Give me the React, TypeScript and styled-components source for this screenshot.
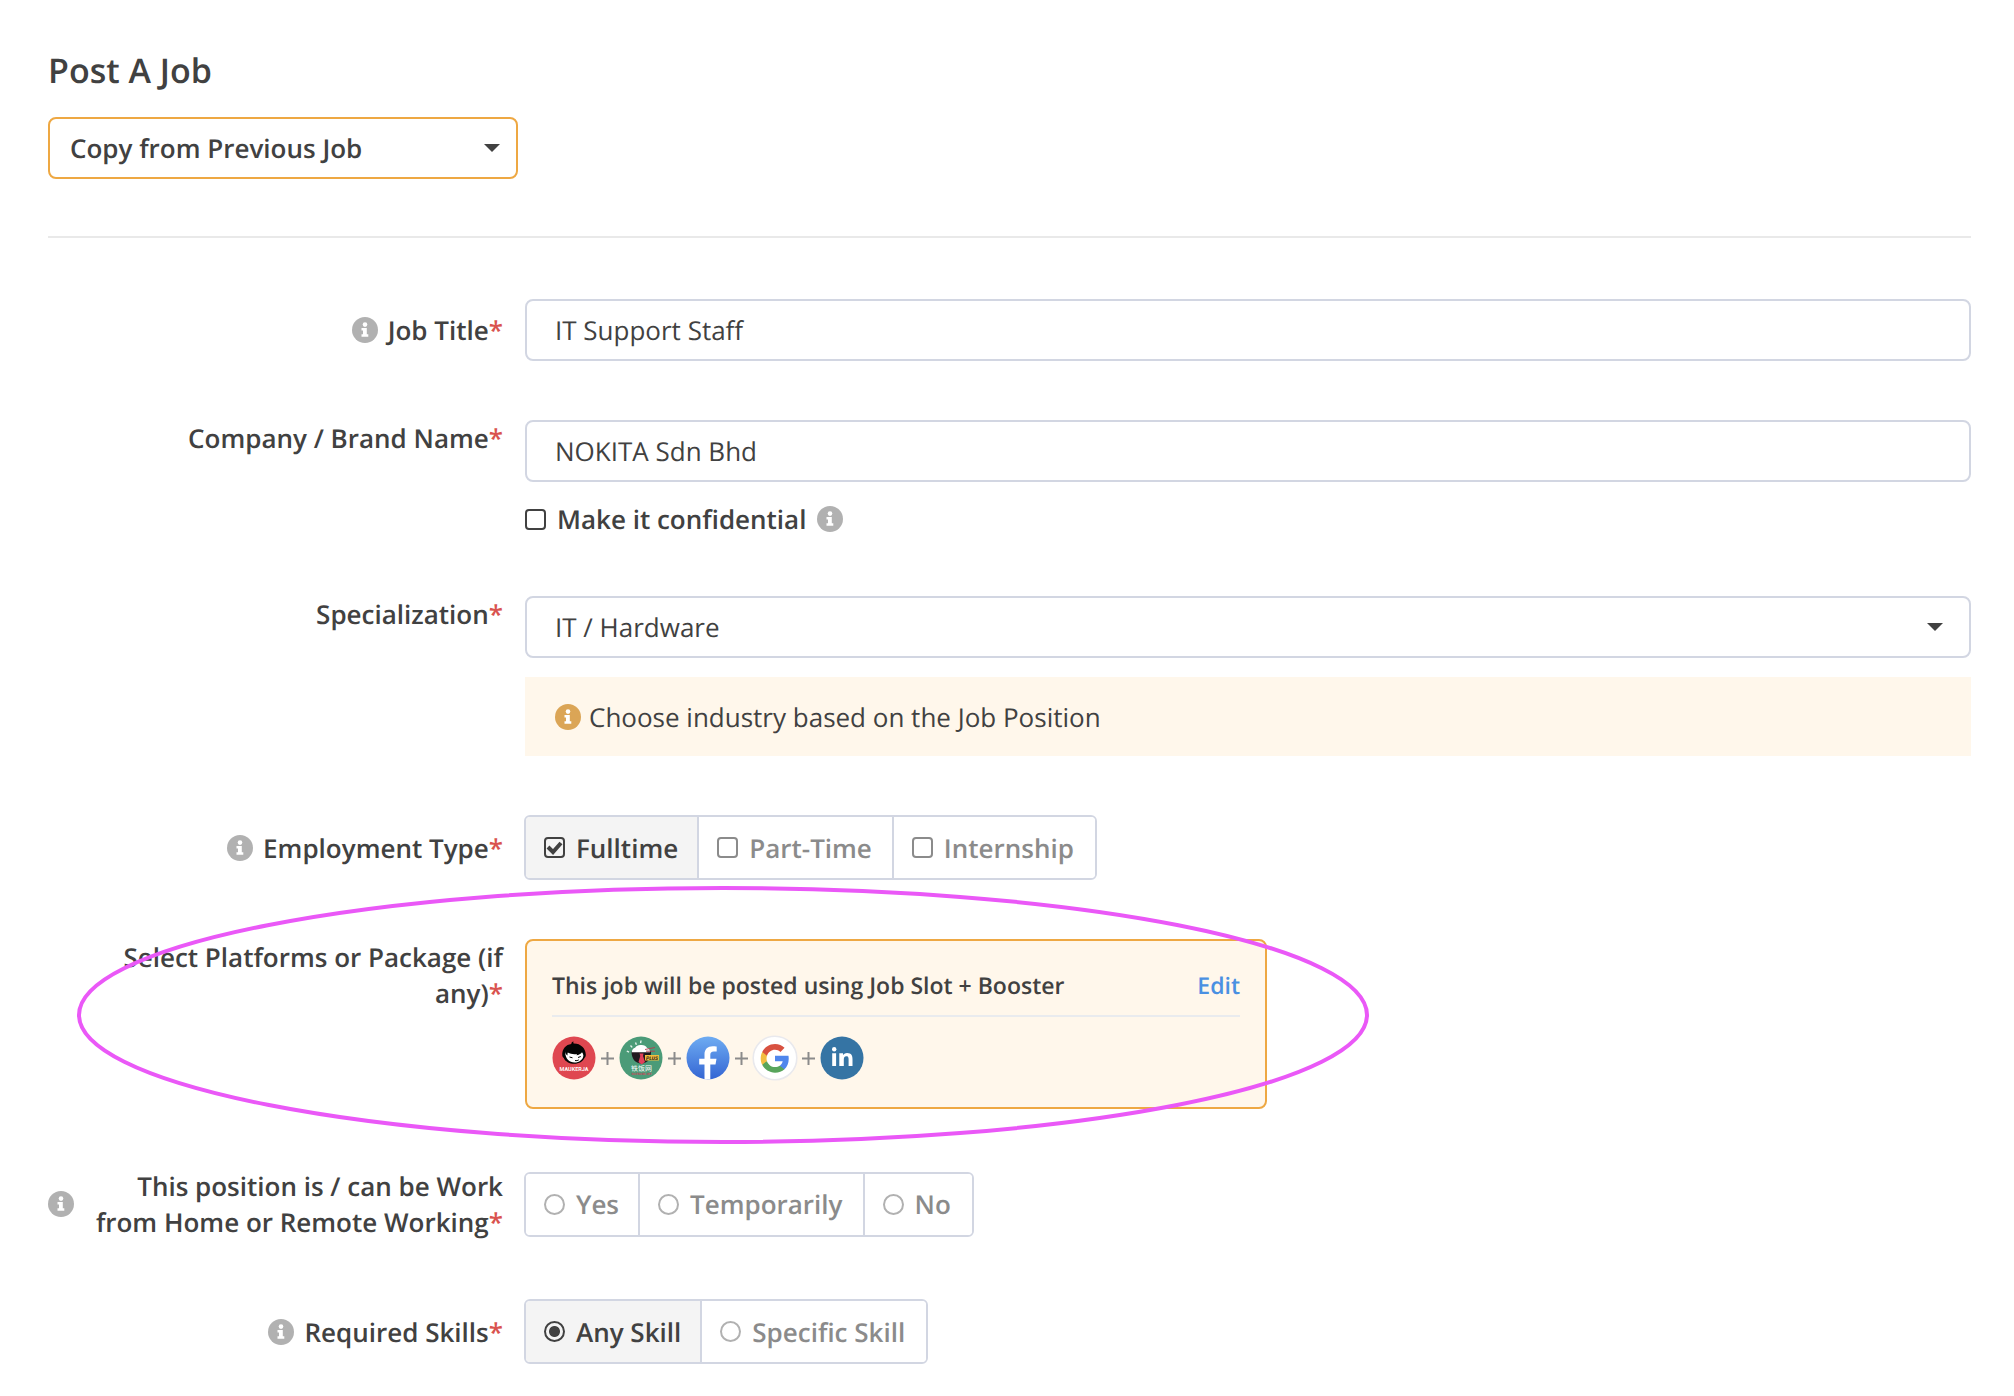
import React, { useState } from 'react';
import styled, { createGlobalStyle } from 'styled-components';

const GlobalStyle = createGlobalStyle`
  *, *::before, *::after { box-sizing: border-box; }
  body {
    margin: 0;
    background: #fff;
    color: #414141;
    font-family: 'Open Sans', 'Noto Sans', 'Noto Sans CJK SC', sans-serif;
    font-size: 26px;
    line-height: 36px;
    text-rendering: geometricPrecision;
  }
`;

const Page = styled.main`
  padding: 46px 43px 32px 48px;
`;

const Title = styled.h1`
  margin: 0 0 23px;
  font-size: 34px;
  line-height: 48px;
  font-weight: 600;
`;

const SelectBox = styled.div<{ $compact?: boolean }>`
  display: grid;
  align-items: center;
  max-width: ${(p) => (p.$compact ? '470px' : 'none')};
`;

const Select = styled.select<{ $accent?: boolean }>`
  grid-area: 1 / 1;
  appearance: none;
  width: 100%;
  height: 62px;
  padding: 0 ${(p) => (p.$accent ? '20px' : '28px')};
  border: 2px solid ${(p) => (p.$accent ? '#eea843' : '#d2d6e2')};
  border-radius: 8px;
  background: #fff;
  color: inherit;
  font: inherit;
  font-weight: ${(p) => (p.$accent ? 600 : 400)};
  text-rendering: inherit;
`;

const Caret = styled.svg<{ $inset: number }>`
  grid-area: 1 / 1;
  justify-self: end;
  width: 16px;
  height: 8px;
  margin-right: ${(p) => p.$inset}px;
  pointer-events: none;
`;

const Divider = styled.hr`
  height: 2px;
  margin: 57px 0 61px;
  border: 0;
  background: #e9e9e9;
`;

const Form = styled.form`
  display: grid;
  gap: 59px;
`;

const Row = styled.div<{ $top?: boolean }>`
  position: relative;
  display: grid;
  grid-template-columns: 455px minmax(0, 1fr);
  column-gap: 22px;
  align-items: ${(p) => (p.$top ? 'start' : 'center')};
`;

const LabelCell = styled.div`
  display: flex;
  justify-content: flex-end;
  align-items: center;
  gap: 10px;
  font-weight: 600;
  text-align: right;
`;

const LabelText = styled.label`
  max-width: 419px;
`;

const Star = styled.span`
  color: #d9534f;
`;

const Info = styled.svg<{ $warm?: boolean }>`
  flex: none;
  width: 26px;
  height: 26px;
  fill: ${(p) => (p.$warm ? '#dba556' : '#b1b1b1')};
`;

const Controls = styled.div`
  display: grid;
  gap: 19px;
`;

const TextInput = styled.input`
  width: 100%;
  height: 62px;
  padding: 0 28px;
  border: 2px solid #d2d6e2;
  border-radius: 8px;
  background: #fff;
  color: inherit;
  font: inherit;
  text-rendering: inherit;
`;

const Confidential = styled.div`
  display: flex;
  align-items: center;
  gap: 11px;
  font-weight: 600;
`;

const TickLabel = styled.label`
  display: flex;
  align-items: center;
  gap: 11px;
`;

const Mark = styled.input`
  appearance: none;
  flex: none;
  width: 21px;
  height: 21px;
  margin: 0;
  border: 2px solid currentColor;
  border-radius: 4px;
  background: center / 17px 17px no-repeat;
  color: inherit;

  &[type='radio'] {
    border-radius: 50%;
    border-color: #b1b1b1;
  }
  &[type='checkbox']:checked {
    background-image: url("data:image/svg+xml,%3Csvg xmlns='http://www.w3.org/2000/svg' viewBox='0 0 17 17'%3E%3Cpath d='M2 8 7 13 15 4' fill='none' stroke='%23414141' stroke-width='4'/%3E%3C/svg%3E");
  }
  &[type='radio']:checked {
    border-color: #414141;
    background-image: radial-gradient(circle, #414141 5px, transparent 6px);
  }
`;

const Notice = styled.p`
  display: flex;
  align-items: center;
  gap: 8px;
  height: 79px;
  margin: 0;
  padding: 0 30px;
  background: #fff7eb;
`;

const Segments = styled.div`
  display: flex;
  justify-self: start;
  width: max-content;
  height: 65px;
  margin-left: -1px;
  border: 2px solid #d2d6e2;
  border-radius: 6px;
  overflow: hidden;
`;

const Segment = styled.label<{ $on: boolean }>`
  display: flex;
  align-items: center;
  gap: 11px;
  padding: 0 19px 0 18px;
  background: ${(p) => (p.$on ? '#f4f4f4' : '#fff')};
  color: ${(p) => (p.$on ? '#414141' : '#8b8b8b')};
  font-weight: 600;

  & + & {
    padding-right: 20px;
    border-left: 2px solid #d2d6e2;
  }
  &:last-child {
    padding-right: 21px;
  }
`;

const Card = styled.section`
  width: 100%;
  max-width: 742px;
  height: 170px;
  padding: 26px 25px;
  border: 2px solid #eea843;
  border-radius: 8px;
  background: #fff7eb;
`;

const CardHead = styled.div`
  display: flex;
  justify-content: space-between;
  padding-bottom: 12px;
  border-bottom: 2px solid #e9ebee;
  font-size: 23px;
  font-weight: 600;
`;

const EditLink = styled.a`
  color: #4a90e2;
  text-decoration: none;
`;

const Platforms = styled.div`
  display: flex;
  align-items: center;
  gap: 5px;
  padding-top: 18px;
`;

const Logo = styled.svg`
  width: 46px;
  height: 46px;
  margin: 0 -1px;
`;

const Plus = styled.svg`
  width: 13px;
  height: 13px;
`;

const Highlight = styled.svg`
  position: absolute;
  top: -54px;
  left: 27px;
  width: 1296px;
  height: 260px;
  pointer-events: none;
`;

function InfoIcon({ warm }: { warm?: boolean }) {
  return (
    <Info $warm={warm} viewBox="0 0 26 26" role="img" aria-label="More information">
      <circle cx="13" cy="13" r="13" />
      <circle cx="13" cy="7.600" r="2.300" fill="#fff" />
      <path d="M9.500 11h5.300v6.300h1.500v2.500H9.500v-2.500H11v-3.800H9.500z" fill="#fff" />
    </Info>
  );
}

function CaretIcon({ inset }: { inset: number }) {
  return (
    <Caret $inset={inset} viewBox="0 0 16 8" aria-hidden="true">
      <path d="M0 0h16L8 8z" fill="#414141" />
    </Caret>
  );
}

function Label({ htmlFor, id, info, children }: {
  htmlFor?: string; id?: string; info?: boolean; children: React.ReactNode;
}) {
  return (
    <LabelCell>
      {info && <InfoIcon />}
      <LabelText as={htmlFor ? 'label' : 'span'} htmlFor={htmlFor} id={id}>
        {children}<Star>*</Star>
      </LabelText>
    </LabelCell>
  );
}

function ChoiceGroup({ name, labelledBy, options, initial, multiple }: {
  name: string; labelledBy: string; options: string[]; initial: string[]; multiple?: boolean;
}) {
  const [picked, setPicked] = useState<string[]>(initial);
  const toggle = (option: string) => {
    if (!multiple) setPicked([option]);
    else setPicked((p) => (p.includes(option) ? p.filter((o) => o !== option) : [...p, option]));
  };
  return (
    <Segments role={multiple ? 'group' : 'radiogroup'} aria-labelledby={labelledBy}>
      {options.map((option) => (
        <Segment key={option} $on={picked.includes(option)}>
          <Mark
            type={multiple ? 'checkbox' : 'radio'}
            name={name}
            checked={picked.includes(option)}
            onChange={() => toggle(option)}
          />
          {option}
        </Segment>
      ))}
    </Segments>
  );
}

function MaukerjaLogo() {
  return (
    <Logo viewBox="0 0 46 46" role="img" aria-label="Maukerja">
      <circle cx="23" cy="23" r="21.500" fill="#df4750" />
      <path d="M11.300 20.500C10.800 14 15 9.400 20.300 8.900c0-1.300 1-2.200 2.300-2.300-.4.700-.4 1.300 0 1.900 7-.2 12 4.800 12.200 11 .1 1.600-.4 2.700-1.200 3.300C32 26.600 28 28.800 23.300 28.800S14 26.500 12.800 23c-.8-.5-1.400-1.300-1.500-2.500z" fill="#050505" />
      <path d="M14 16.500c.3 2 1.100 3.200 2.600 4-.3-1.200-.2-2.100.2-3 2.800 1.500 6 2 9.300 1.400l-.7 1.400c2.400-.3 4.300-1.300 5.600-3 .8 1 1.300 2 1.400 3.200-.3 4.300-4.300 7-8.800 7-5.300 0-9.300-3.600-9.600-11z" fill="#fff" />
      <path d="m18.500 22 3 .8M27 22.500l2.800-1M24 25.500c1.500.3 2.800.1 3.800-.7" stroke="#050505" strokeWidth="1" fill="none" />
      <text x="23" y="36" textAnchor="middle" fontSize="5.500" fontWeight="600" fontFamily="Roboto, sans-serif" fill="#fff">MAUKERJA</text>
    </Logo>
  );
}

function RicebowlLogo() {
  return (
    <Logo viewBox="0 0 46 46" role="img" aria-label="Ricebowl">
      <circle cx="23" cy="23" r="21.500" fill="#4b9b78" />
      <path d="m8.800 16 2.200 1.200M12.500 10.500l1.700 1.900M17.500 7.500l.9 2.200M23 5.500l-.4 2.600" stroke="#e5f3ec" strokeWidth="1.400" />
      <path d="M13.500 16.500h19.500c.3 7-3.500 12-9.700 12s-9.800-5-9.800-12z" fill="#20191f" />
      <path d="M13.800 17.300c0-2.500 1.500-4.200 3.300-4.600 1.200-2 3.600-3 6-2.700 2.700-.2 5 1 6 3 1.800.5 3 2 3 4.300z" fill="#fff" />
      <path d="m27 14.500 10-2M28 16.200h9" stroke="#b43c50" strokeWidth=".9" />
      <path d="M21.500 18.500h4L25 21l2 6-3.300 2.500L20.500 27l1.800-6z" fill="#e2405b" />
      <rect x="27" y="20" width="14" height="5.500" fill="#f1bd3c" />
      <text x="34" y="24.500" textAnchor="middle" fontSize="5" fontWeight="700" fontStyle="italic" fontFamily="Roboto, sans-serif" fill="#20191f">PLUS</text>
      <text x="23.500" y="35.500" textAnchor="middle" fontSize="7" fontFamily="'Noto Sans CJK SC', sans-serif" fill="#fff">铁饭网</text>
      <text x="23.500" y="39.500" textAnchor="middle" fontSize="3" fontWeight="700" fontFamily="Roboto, sans-serif" fill="#c8475c">RICEBOWL.MY</text>
    </Logo>
  );
}

function FacebookLogo() {
  return (
    <Logo viewBox="0 0 46 46" role="img" aria-label="Facebook">
      <defs>
        <linearGradient id="fb" x2="0" y2="1">
          <stop stopColor="#6eacf2" />
          <stop offset="1" stopColor="#3465d3" />
        </linearGradient>
      </defs>
      <circle cx="23" cy="23" r="21.500" fill="url(#fb)" />
      <path d="M19.500 44.300V29.600h-5.300v-5.800h5.300v-4.300c0-5.600 3.300-8.300 8.200-8.300 1.700 0 3.100.2 4 .3v5h-2.900c-2.600 0-3.500 1.300-3.500 3.300v4h6.200l-1 5.800h-5.200v14.700c-1.900.3-3.900.3-5.800 0z" fill="#fff" />
    </Logo>
  );
}

function GoogleLogo() {
  return (
    <Logo viewBox="0 0 46 46" role="img" aria-label="Google">
      <circle cx="23" cy="23" r="21.800" fill="#fff" stroke="#e9e9ed" strokeWidth="1.600" />
      <g transform="translate(7.400 7.800) scale(1.300)">
        <path fill="#4f86ec" d="M22.560 12.250c0-.78-.07-1.530-.2-2.250H12v4.260h5.920c-.26 1.370-1.040 2.530-2.210 3.310v2.770h3.570c2.080-1.920 3.280-4.740 3.280-8.090z" />
        <path fill="#58a55c" d="M12 23c2.970 0 5.460-.98 7.280-2.660l-3.570-2.770c-.98.66-2.230 1.060-3.710 1.060-2.860 0-5.290-1.930-6.160-4.530H2.180v2.840C3.990 20.530 7.700 23 12 23z" />
        <path fill="#f2bd42" d="M5.840 14.090c-.22-.66-.35-1.360-.35-2.090s.13-1.430.35-2.090V7.070H2.180C1.430 8.550 1 10.220 1 12s.43 3.450 1.180 4.930z" />
        <path fill="#d85140" d="M12 5.380c1.620 0 3.060.56 4.210 1.640l3.150-3.150C17.450 2.090 14.970 1 12 1 7.700 1 3.990 3.470 2.180 7.070l3.660 2.840c.87-2.600 3.300-4.530 6.160-4.530z" />
      </g>
    </Logo>
  );
}

function LinkedInLogo() {
  return (
    <Logo viewBox="0 0 46 46" role="img" aria-label="LinkedIn">
      <circle cx="23" cy="23" r="21.500" fill="#3574a4" />
      <circle cx="15.200" cy="14.300" r="2.200" fill="#fff" />
      <path d="M13.200 18.300h3.900V31h-3.900zM20.300 18.300H24v1.800c.6-1.100 2-2.200 4.100-2.200 4.400 0 5.400 2.800 5.400 6.300V31h-3.900v-6.200c0-1.600 0-3.600-2.200-3.600s-2.600 1.700-2.600 3.500V31h-4.500z" fill="#fff" />
    </Logo>
  );
}

function PlusIcon() {
  return (
    <Plus viewBox="0 0 13 13" aria-hidden="true">
      <path d="M6.500 0v13M0 6.500h13" stroke="#8b8b8b" strokeWidth="2" />
    </Plus>
  );
}

export default function App() {
  return (
    <>
      <GlobalStyle />
      <Page>
        <Title>Post A Job</Title>
        <SelectBox $compact>
          <Select $accent aria-label="Copy from Previous Job">
            <option>Copy from Previous Job</option>
          </Select>
          <CaretIcon inset={18} />
        </SelectBox>
        <Divider />
        <Form onSubmit={(e) => e.preventDefault()}>
          <Row>
            <Label info htmlFor="job-title">Job Title</Label>
            <TextInput id="job-title" defaultValue="IT Support Staff" />
          </Row>
          <Row $top>
            <Label htmlFor="company">Company / Brand Name</Label>
            <Controls>
              <TextInput id="company" defaultValue="NOKITA Sdn Bhd" />
              <Confidential>
                <TickLabel>
                  <Mark type="checkbox" name="confidential" />
                  Make it confidential
                </TickLabel>
                <InfoIcon />
              </Confidential>
            </Controls>
          </Row>
          <Row $top>
            <Label htmlFor="specialization">Specialization</Label>
            <Controls>
              <SelectBox>
                <Select id="specialization">
                  <option>IT / Hardware</option>
                </Select>
                <CaretIcon inset={28} />
              </SelectBox>
              <Notice>
                <InfoIcon warm />
                Choose industry based on the Job Position
              </Notice>
            </Controls>
          </Row>
          <Row>
            <Label info id="employment">Employment Type</Label>
            <ChoiceGroup multiple name="employment" labelledBy="employment" options={['Fulltime', 'Part-Time', 'Internship']} initial={['Fulltime']} />
          </Row>
          <Row $top>
            <Label id="platforms">Select Platforms or Package (if any)</Label>
            <Card aria-labelledby="platforms">
              <CardHead>
                <span>This job will be posted using Job Slot + Booster</span>
                <EditLink href="#platforms">Edit</EditLink>
              </CardHead>
              <Platforms>
                <MaukerjaLogo />
                <PlusIcon />
                <RicebowlLogo />
                <PlusIcon />
                <FacebookLogo />
                <PlusIcon />
                <GoogleLogo />
                <PlusIcon />
                <LinkedInLogo />
              </Platforms>
            </Card>
            <Highlight viewBox="0 0 1296 260" aria-hidden="true">
              <ellipse cx="648" cy="130" rx="644" ry="127" fill="none" stroke="#ea58f7" strokeWidth="4" />
            </Highlight>
          </Row>
          <Row>
            <Label info id="remote">This position is / can be Work from Home or Remote Working</Label>
            <ChoiceGroup name="remote" labelledBy="remote" options={['Yes', 'Temporarily', 'No']} initial={[]} />
          </Row>
          <Row>
            <Label info id="skills">Required Skills</Label>
            <ChoiceGroup name="skills" labelledBy="skills" options={['Any Skill', 'Specific Skill']} initial={['Any Skill']} />
          </Row>
        </Form>
      </Page>
    </>
  );
}
